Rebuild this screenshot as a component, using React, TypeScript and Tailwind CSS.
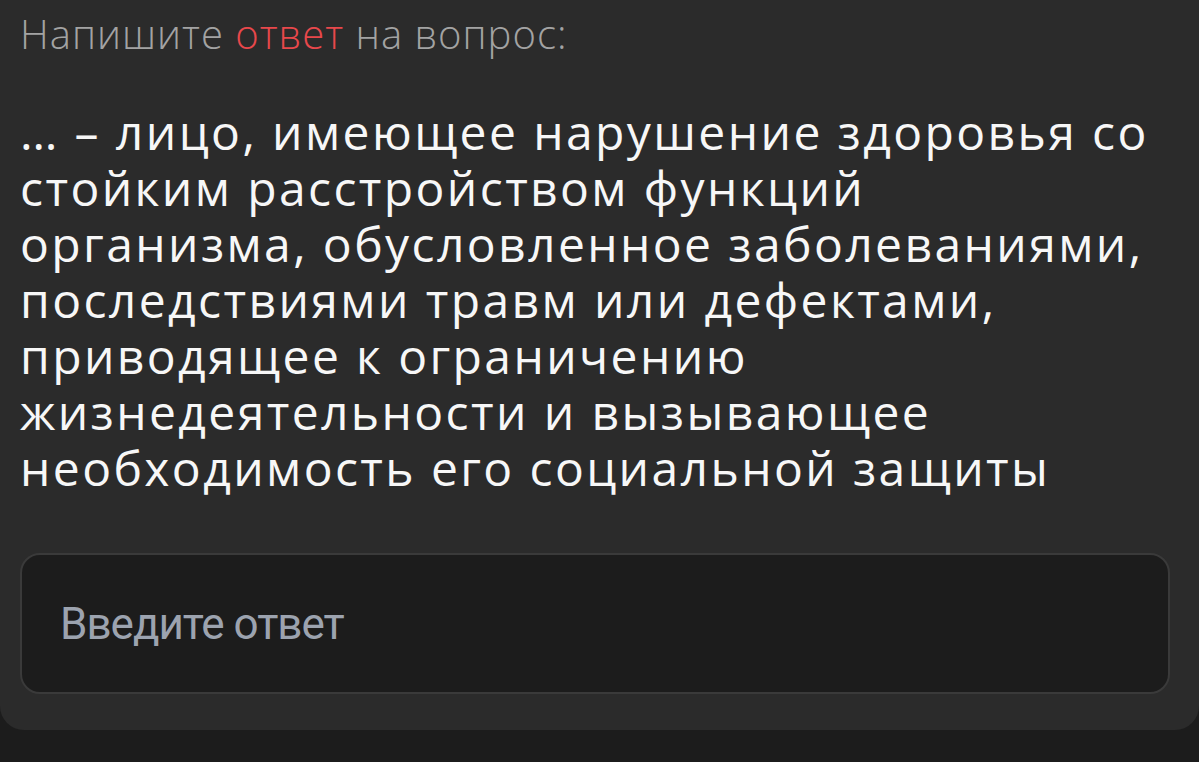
import React from "react";

const lines = [
  "… – лицо, имеющее нарушение здоровья со",
  "стойким расстройством функций",
  "организма, обусловленное заболеваниями,",
  "последствиями травм или дефектами,",
  "приводящее к ограничению",
  "жизнедеятельности и вызывающее",
  "необходимость его социальной защиты",
];

export default function App() {
  return (
    <div className="min-h-screen w-full bg-[#1c1c1c]">
      <div className="w-full bg-[#2b2b2b] rounded-b-[24px] pl-[20px] pr-[29px] pt-[10px] pb-[36px]">
        <div
          className="text-[40px] leading-[48px] font-light tracking-[1px] text-[#a3a3a3] whitespace-nowrap"
          style={{ fontFamily: "'Open Sans', sans-serif" }}
        >
          Напишите <span className="text-[#e8484b]">ответ</span> на вопрос:
        </div>
        <div
          className="mt-[46px] text-[48px] leading-[56px] font-normal tracking-[2.4px] text-[#f7f7f7]"
          style={{ fontFamily: "'Open Sans', sans-serif" }}
        >
          {lines.map((l, i) => (
            <div key={i} className="whitespace-nowrap">
              {l}
            </div>
          ))}
        </div>
        <div className="mt-[57px] h-[141px] w-full rounded-[20px] border-2 border-[#3a3a3a] bg-[#1c1c1c] flex items-center pl-[38px]">
          <input
            className="w-full bg-transparent outline-none text-[44px] tracking-[-1px] text-[#e5e5e5] placeholder:text-[#9ca3af]"
            style={{ fontFamily: "Roboto, sans-serif" }}
            placeholder="Введите ответ"
          />
        </div>
      </div>
    </div>
  );
}
